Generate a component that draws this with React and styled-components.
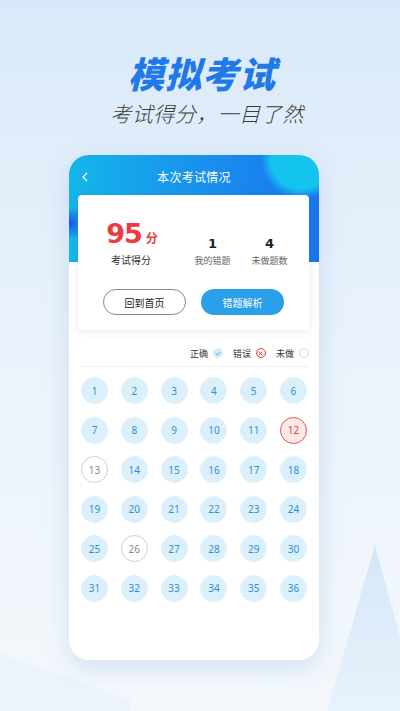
import styled, { createGlobalStyle } from "styled-components";

const GlobalStyle = createGlobalStyle`
  html, body {
    margin: 0;
    padding: 0;
  }
  body {
    font-family: "Noto Sans CJK SC", "Noto Sans", sans-serif;
  }
`;

const wrong = [12];
const undone = [13, 26];
const questions = Array.from({ length: 36 }, (_, i) => i + 1);

const statusOf = (n) =>
  wrong.includes(n) ? "wrong" : undone.includes(n) ? "undone" : "right";

const App = () => (
  <Page>
    <GlobalStyle />
    <Backdrop viewBox="0 0 400 711" preserveAspectRatio="none">
      <defs>
        <linearGradient id="tri" x1="0" y1="0" x2="0" y2="1">
          <stop offset="0" stopColor="#d4e7f8" />
          <stop offset="1" stopColor="#e8f2fb" />
        </linearGradient>
      </defs>
      <polygon points="375,545 420,711 327,711" fill="url(#tri)" />
      <polygon points="0,653 130,700 130,711 0,711" fill="#edf3fa" />
    </Backdrop>
    <Title>模拟考试</Title>
    <Subtitle>考试得分，一目了然</Subtitle>

    <Phone>
      <TopBar>
        <BackButton>
          <svg width="8" height="10" viewBox="0 0 8 10">
            <polyline
              points="6,1 2,5 6,9"
              fill="none"
              stroke="#fff"
              strokeWidth="1.3"
            />
          </svg>
        </BackButton>
        <TopTitle>本次考试情况</TopTitle>
      </TopBar>

      <ScoreCard>
        <Stats>
          <ScoreCol>
            <Score>
              95<ScoreUnit>分</ScoreUnit>
            </Score>
            <ScoreLabel>考试得分</ScoreLabel>
          </ScoreCol>
          <StatCol>
            <StatValue>1</StatValue>
            <StatLabel>我的错题</StatLabel>
          </StatCol>
          <StatCol>
            <StatValue>4</StatValue>
            <StatLabel>未做题数</StatLabel>
          </StatCol>
        </Stats>
        <Buttons>
          <OutlineButton>回到首页</OutlineButton>
          <FilledButton>错题解析</FilledButton>
        </Buttons>
      </ScoreCard>

      <Legend>
        <LegendItem>
          正确
          <LegendMark $kind="right">
            <svg width="6" height="5" viewBox="0 0 6 5">
              <polyline
                points="0.6,2.6 2.3,4 5.4,0.8"
                fill="none"
                stroke="#3d9ad8"
                strokeWidth="0.9"
              />
            </svg>
          </LegendMark>
        </LegendItem>
        <LegendItem>
          错误
          <LegendMark $kind="wrong">
            <svg width="5" height="5" viewBox="0 0 5 5">
              <path
                d="M0.6 0.6 L4.4 4.4 M4.4 0.6 L0.6 4.4"
                stroke="#e04848"
                strokeWidth="0.9"
              />
            </svg>
          </LegendMark>
        </LegendItem>
        <LegendItem>
          未做
          <LegendMark $kind="undone" />
        </LegendItem>
      </Legend>
      <Divider />

      <Grid>
        {questions.map((n) => (
          <Bubble key={n} $status={statusOf(n)}>
            {n}
          </Bubble>
        ))}
      </Grid>
    </Phone>
  </Page>
);

const Page = styled.div`
  position: relative;
  width: 400px;
  height: 711px;
  overflow: hidden;
  background: linear-gradient(180deg, #d9e9f9 0%, #e9f2fb 45%, #f4f8fc 100%);
  display: flex;
  flex-direction: column;
  align-items: flex-start;
`;

const Backdrop = styled.svg`
  position: absolute;
  inset: 0;
  width: 400px;
  height: 711px;
`;

const Title = styled.h1`
  position: relative;
  align-self: center;
  margin: 49px 0 0 4px;
  font-size: 36px;
  line-height: 46px;
  font-weight: 900;
  font-style: italic;
  letter-spacing: 1px;
  color: #1f79ea;
`;

const Subtitle = styled.div`
  position: relative;
  align-self: center;
  margin: 4px 0 0 14px;
  font-size: 21px;
  line-height: 28px;
  font-weight: 300;
  font-style: italic;
  color: #3a3a3a;
  letter-spacing: 0.5px;
`;

const Phone = styled.div`
  position: relative;
  margin: 28px 0 0 69px;
  width: 250px;
  height: 505px;
  border-radius: 20px;
  overflow: hidden;
  box-shadow: 0 8px 24px rgba(120, 160, 210, 0.25);
  background:
    radial-gradient(circle at 232px 4px, #14c6ee 0, #14c3ee 30px, rgba(20, 190, 238, 0) 40px)
      0 0 / 100% 108px no-repeat,
    radial-gradient(ellipse 22px 16px at 0 68px, #1a56e8 0, rgba(26, 86, 232, 0) 100%)
      0 0 / 100% 108px no-repeat,
    linear-gradient(90deg, #14b6ea 0%, #1896ec 45%, #1a74f0 100%)
      0 0 / 100% 107px no-repeat,
    #fff;
`;

const TopBar = styled.div`
  height: 40px;
  display: flex;
  align-items: center;
  justify-content: center;
  position: relative;
`;

const BackButton = styled.div`
  position: absolute;
  left: 12px;
  top: 17px;
  display: flex;
`;

const TopTitle = styled.div`
  font-size: 12px;
  color: #fff;
  letter-spacing: 0.3px;
  margin-top: 2px;
`;

const ScoreCard = styled.div`
  margin: 0 10px 0 9px;
  height: 135px;
  background: #fff;
  border-radius: 4px;
  box-shadow: 0 2px 8px rgba(60, 90, 130, 0.12);
  display: flex;
  flex-direction: column;
`;

const Stats = styled.div`
  display: flex;
  align-items: flex-end;
  padding: 24px 0 0 0;
  height: 48px;
`;

const ScoreCol = styled.div`
  width: 106px;
  display: flex;
  flex-direction: column;
  align-items: center;
`;

const Score = styled.div`
  font-family: "DejaVu Sans", "Noto Sans", sans-serif;
  font-size: 27px;
  line-height: 30px;
  font-weight: 700;
  color: #ec3a3e;
  letter-spacing: -1px;
  padding-left: 2px;
`;

const ScoreUnit = styled.span`
  font-family: "Noto Sans CJK SC", sans-serif;
  font-size: 12px;
  margin-left: 4px;
  letter-spacing: 0;
`;

const ScoreLabel = styled.div`
  font-size: 10px;
  line-height: 14px;
  color: #333;
  margin-top: 0;
`;

const StatCol = styled.div`
  width: 57px;
  display: flex;
  flex-direction: column;
  align-items: center;
`;

const StatValue = styled.div`
  font-family: "DejaVu Sans", "Noto Sans", sans-serif;
  font-size: 13px;
  line-height: 16px;
  font-weight: 700;
  color: #222;
`;

const StatLabel = styled.div`
  font-size: 9px;
  line-height: 13px;
  color: #666;
  margin-top: 2px;
`;

const Buttons = styled.div`
  display: flex;
  justify-content: center;
  gap: 15px;
  margin-top: 22px;
`;

const BaseButton = styled.div`
  width: 83px;
  height: 26px;
  box-sizing: border-box;
  border-radius: 13px;
  display: flex;
  align-items: center;
  justify-content: center;
  font-size: 10px;
`;

const OutlineButton = styled(BaseButton)`
  border: 1px solid #888;
  color: #222;
`;

const FilledButton = styled(BaseButton)`
  background: #2b9fe9;
  color: #fff;
`;

const Legend = styled.div`
  margin-top: 15px;
  height: 16px;
  display: flex;
  justify-content: flex-end;
  align-items: center;
  gap: 10px;
  padding-right: 10px;
`;

const LegendItem = styled.div`
  display: flex;
  align-items: center;
  gap: 5px;
  font-size: 9px;
  color: #333;
`;

const LegendMark = styled.span`
  width: 10px;
  height: 10px;
  box-sizing: border-box;
  border-radius: 50%;
  display: flex;
  align-items: center;
  justify-content: center;
  background: ${({ $kind }) =>
    $kind === "right" ? "#d7edfb" : $kind === "wrong" ? "#fdf0f0" : "#fff"};
  border: 1px solid
    ${({ $kind }) =>
      $kind === "right" ? "#d7edfb" : $kind === "wrong" ? "#e04848" : "#d6d6d6"};
`;

const Divider = styled.div`
  margin: 5px 10px 0 11px;
  height: 1px;
  background: #eef0f2;
`;

const Grid = styled.div`
  margin: 10px 12px 0 12px;
  display: grid;
  grid-template-columns: repeat(6, 27px);
  justify-content: space-between;
  row-gap: 12.6px;
`;

const Bubble = styled.div`
  width: 27px;
  height: 27px;
  box-sizing: border-box;
  border-radius: 50%;
  display: flex;
  align-items: center;
  justify-content: center;
  font-family: "Noto Sans", sans-serif;
  font-weight: 400;
  font-size: 10px;
  background: ${({ $status }) =>
    $status === "wrong" ? "#fde9e8" : $status === "undone" ? "#fff" : "#dcf0fc"};
  border: 1px solid
    ${({ $status }) =>
      $status === "wrong" ? "#e05050" : $status === "undone" ? "#cfcfcf" : "#dcf0fc"};
  color: ${({ $status }) =>
    $status === "wrong" ? "#e04444" : $status === "undone" ? "#888" : "#2f8fd6"};
`;

export default App;
